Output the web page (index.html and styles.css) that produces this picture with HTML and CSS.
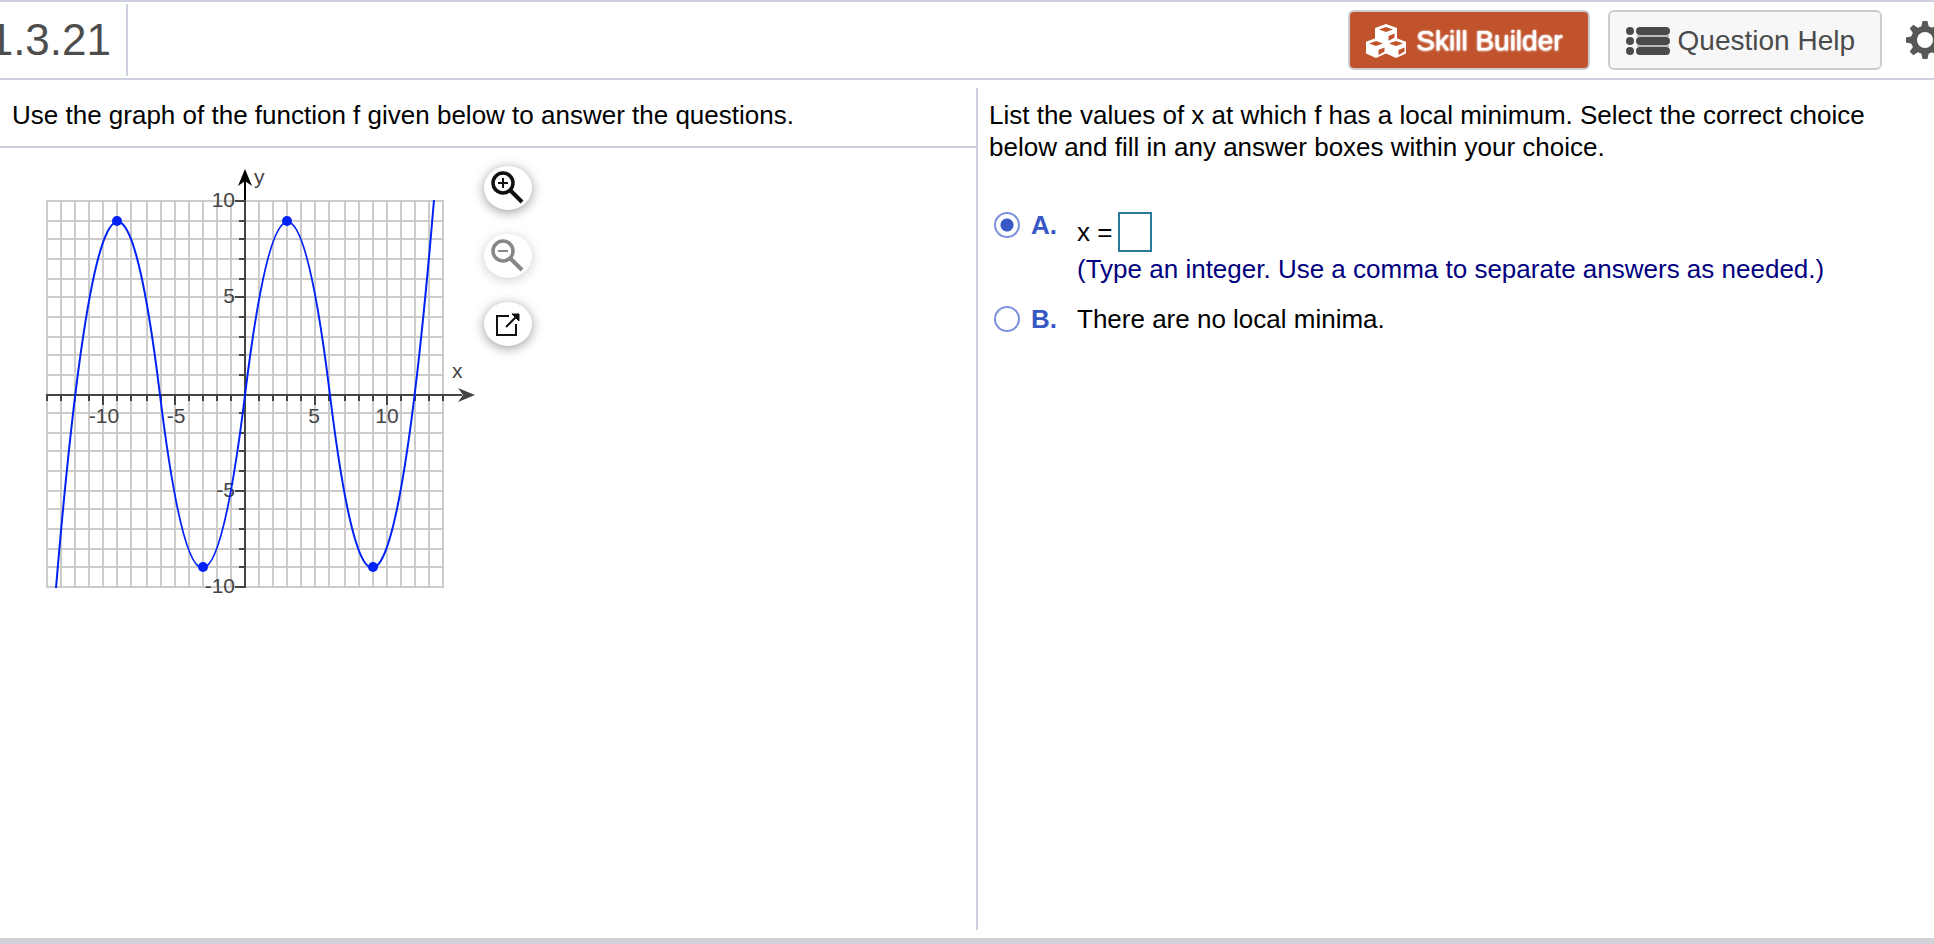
FILE: index.html
```html
<!DOCTYPE html>
<html lang="en">
	<head>
		<meta charset="utf-8">
		<title>1.3.21</title>
		<link rel="stylesheet" href="styles.css">
	</head>
	<body>
		<header class="header">
			<h1 class="number">1.3.21</h1>
			<div class="tools">
				<button type="button" class="btn skill">
					<svg width="40" height="34" viewBox="0 0 40 34">
						<g id="cube">
							<path d="M20 0 L31 4 V15 L20 20 L9 15 V4 Z" fill="#fff"/>
							<path d="M20 3 L27 5.500 L20 8 L13 5.500 Z" fill="#c0532c"/>
							<path d="M22.500 12 L28.500 9.500 V13.500 L22.500 17 Z" fill="#c0532c"/>
						</g>
						<use href="#cube" x="-10" y="14"/>
						<use href="#cube" x="10" y="14"/>
					</svg>
					Skill Builder
				</button>
				<button type="button" class="btn">
					<svg width="44" height="30" viewBox="0 0 44 30" fill="#4b4b4b">
						<path d="M11 10H43M11 20H43" stroke="#bbb" stroke-width="2"/>
						<circle cx="4" cy="5" r="4"/>
						<circle cx="4" cy="15" r="4"/>
						<circle cx="4" cy="25" r="4"/>
						<rect x="10" y="1" width="34" height="8" rx="4"/>
						<rect x="10" y="11" width="34" height="8" rx="4"/>
						<rect x="10" y="21" width="34" height="8" rx="4"/>
					</svg>
					Question Help
				</button>
				<button type="button" class="gear" aria-label="Settings">
					<svg width="40" height="40" viewBox="-20 -20 40 40">
						<g fill="#575757">
							<path id="tooth" d="M-4 -12 L-2.500 -19 H2.500 L4 -12 V12 L2.500 19 H-2.500 L-4 12 Z"/>
							<use href="#tooth" transform="rotate(45)"/>
							<use href="#tooth" transform="rotate(90)"/>
							<use href="#tooth" transform="rotate(135)"/>
							<circle r="14"/>
						</g>
						<circle r="8" fill="#fff"/>
					</svg>
				</button>
			</div>
		</header>
		<main class="main">
			<section class="left">
				<p class="question">Use the graph of the function f given below to answer the questions.</p>
				<div class="figure">
					<svg class="graph" width="434" height="436" viewBox="46 164 434 436">
						<!-- grid -->
						<path class="grid" d="M47 200V588M61 200V588M75 200V588M89 200V588M103 200V588M117 200V588M131 200V588M147 200V588M161 200V588M175 200V588M189 200V588M203 200V588M217 200V588M231 200V588M259 200V588M273 200V588M287 200V588M301 200V588M315 200V588M329 200V588M345 200V588M359 200V588M373 200V588M387 200V588M401 200V588M415 200V588M429 200V588M443 200V588"/>
						<path class="grid" d="M46 201H444M46 221H444M46 239H444M46 259H444M46 279H444M46 297H444M46 317H444M46 337H444M46 355H444M46 375H444M46 413H444M46 433H444M46 451H444M46 471H444M46 491H444M46 509H444M46 529H444M46 549H444M46 567H444M46 587H444"/>
						<!-- axes -->
						<path class="axis" d="M46 395H462M245 200V588"/>
						<path class="axis" d="M47 395V401M61 395V401M75 395V401M89 395V401M103 395V405M117 395V401M131 395V401M147 395V401M161 395V401M175 395V405M189 395V401M203 395V401M217 395V401M231 395V401M259 395V401M273 395V401M287 395V401M301 395V401M315 395V405M329 395V401M345 395V401M359 395V401M373 395V401M387 395V405M401 395V401M415 395V401M429 395V401M443 395V401"/>
						<path class="axis" d="M235 201H245M239 221H245M239 239H245M239 259H245M239 279H245M235 297H245M239 317H245M239 337H245M239 355H245M239 375H245M239 413H245M239 433H245M239 451H245M239 471H245M235 491H245M239 509H245M239 529H245M239 549H245M239 567H245M235 587H245"/>
						<path d="M475 395L458 388L463 395L458 402Z" fill="#444"/>
						<path d="M245 200V176" stroke="#000" stroke-width="2"/>
						<path d="M245 169L238 186L245 181L252 186Z"/>
						<g class="labels">
							<text x="104" y="423" text-anchor="middle">-10</text>
							<text x="176" y="423" text-anchor="middle">-5</text>
							<text x="314" y="423" text-anchor="middle">5</text>
							<text x="387" y="423" text-anchor="middle">10</text>
							<text x="235" y="207" text-anchor="end">10</text>
							<text x="235" y="303" text-anchor="end">5</text>
							<text x="235" y="497" text-anchor="end">-5</text>
							<text x="235" y="593" text-anchor="end">-10</text>
							<text x="254" y="184">y</text>
							<text x="452" y="378">x</text>
						</g>
						<path class="curve" d="M56 588Q108 -30 160 395Q202.500 741 245 395Q287.500 49 330 395Q382 820 434 200"/>
						<g fill="#0022f5">
							<circle cx="117" cy="221" r="5"/>
							<circle cx="203" cy="567" r="5"/>
							<circle cx="287" cy="221" r="5"/>
							<circle cx="373" cy="567" r="5"/>
						</g>
					</svg>
					<div class="zoom">
						<button type="button" class="round" aria-label="Zoom in">
							<svg width="36" height="36" viewBox="0 0 36 36" fill="none" stroke="#111">
								<circle cx="13" cy="13" r="10" stroke-width="3.500"/>
								<path d="M13 8V18M8 13H18" stroke-width="2"/>
								<path d="M20 20L32 32" stroke-width="4"/>
							</svg>
						</button>
						<button type="button" class="round" aria-label="Zoom out" disabled>
							<svg width="36" height="36" viewBox="0 0 36 36" fill="none" stroke="#111">
								<circle cx="13" cy="13" r="10" stroke-width="3.500"/>
								<path d="M8 13H18" stroke-width="2"/>
								<path d="M20 20L32 32" stroke-width="4"/>
							</svg>
						</button>
						<button type="button" class="round" aria-label="Open in new window">
							<svg width="36" height="36" viewBox="0 0 36 36" fill="none" stroke="#111" stroke-width="2">
								<path d="M19 10H7V29H26V18M16 21L27 10"/>
								<path d="M22 8H29V15Z" fill="#111" stroke-width="1"/>
							</svg>
						</button>
					</div>
				</div>
			</section>
			<section class="right">
				<p>List the values of x at which f has a local minimum. Select the correct choice below and fill in any answer boxes within your choice.</p>
				<form class="choices">
					<div class="choice">
						<input type="radio" name="answer" id="choiceA" checked>
						<label class="letter" for="choiceA">A.</label>
						<div class="body">
							<div class="equation">
								<label for="xValue">x =</label>
								<input type="text" id="xValue">
							</div>
							<p class="hint">(Type an integer. Use a comma to separate answers as needed.)</p>
						</div>
					</div>
					<div class="choice">
						<input type="radio" name="answer" id="choiceB">
						<label class="letter" for="choiceB">B.</label>
						<label class="body" for="choiceB">There are no local minima.</label>
					</div>
				</form>
			</section>
		</main>
	</body>
</html>
```
FILE: styles.css
```css
*{margin: 0; padding: 0; box-sizing: border-box;}
body{display: flex; flex-direction: column; min-height: 100vh; background: #fff; color: #000; font: 26px/32px "Liberation Sans", Arial, sans-serif; border-top: 2px solid #cdd0de; border-bottom: 6px solid #cfd0d8; overflow-x: hidden;}
svg{display: block; flex: none;}
button{font: inherit; cursor: pointer;}

.header{display: flex; justify-content: space-between; align-items: center; height: 78px; border-bottom: 2px solid #cdd0de; overflow: hidden;}
.number{width: 128px; height: 72px; line-height: 72px; padding: 0 15px 0 0; border-right: 2px solid #cdd0de; display: flex; justify-content: flex-end; font-size: 44px; font-weight: normal; color: #4d4d4d;}
.tools{display: flex; align-items: center; margin-right: -11px;}
.btn{display: flex; align-items: center; gap: 8px; height: 60px; margin-right: 18px; padding: 2px 25px 0 16px; border: 2px solid #ccc; border-radius: 6px; background: #f7f7f7; color: #4b4b4b; font-size: 28px; white-space: nowrap;}
.skill{gap: 10px; background: #c0532c; color: #fff; text-shadow: 0 0 2px #fff, 0 1px 2px #fff;}
.gear{border: 0; background: none; margin-left: 5px;}

.main{flex: 1; display: grid; grid-template-columns: 978fr 956fr; margin: 8px 0;}
.left{border-right: 2px solid #cdd0de;}
.question{padding: 11px 12px 15px; border-bottom: 2px solid #cdd0de;}
.figure{display: flex; padding: 16px 0 0 46px;}
.grid{stroke: #ccc; stroke-width: 2;}
.axis{stroke: #444; stroke-width: 2;}
.curve{fill: none; stroke: #0022f5; stroke-width: 2;}
.labels{font-size: 21px; fill: #444;}
.zoom{display: flex; flex-direction: column; gap: 24px; padding-top: 2px; margin-left: 4px;}
.round{display: flex; justify-content: center; align-items: center; width: 48px; height: 44px; border: 0; border-radius: 50%; background: #fff; box-shadow: 0 2px 12px rgba(0,0,0,.4);}
.round:disabled{box-shadow: 0 2px 12px rgba(0,0,0,.2);}
.round:disabled svg{opacity: .5;}

.right{padding: 11px 60px 0 11px;}
.choices{display: flex; flex-direction: column; gap: 18px; margin-top: 46px;}
.choice{display: flex; align-items: flex-start;}
.choice input[type=radio]{appearance: none; flex: none; width: 26px; height: 26px; margin: 3px 11px 0 5px; border: 2px solid #7d92dc; border-radius: 50%;}
.choice input[type=radio]:checked{background: radial-gradient(circle, #3757c4 6px, #fff 7px);}
.letter{flex: none; width: 46px; color: #3757c4; font-weight: bold;}
.equation{display: flex; align-items: center; gap: 6px; padding: 3px 0 1px;}
.equation input{width: 34px; height: 40px; padding: 0 4px; border: 2px solid #2b7a9b; background: #fff; font: inherit;}
.hint{color: #000080;}
```
